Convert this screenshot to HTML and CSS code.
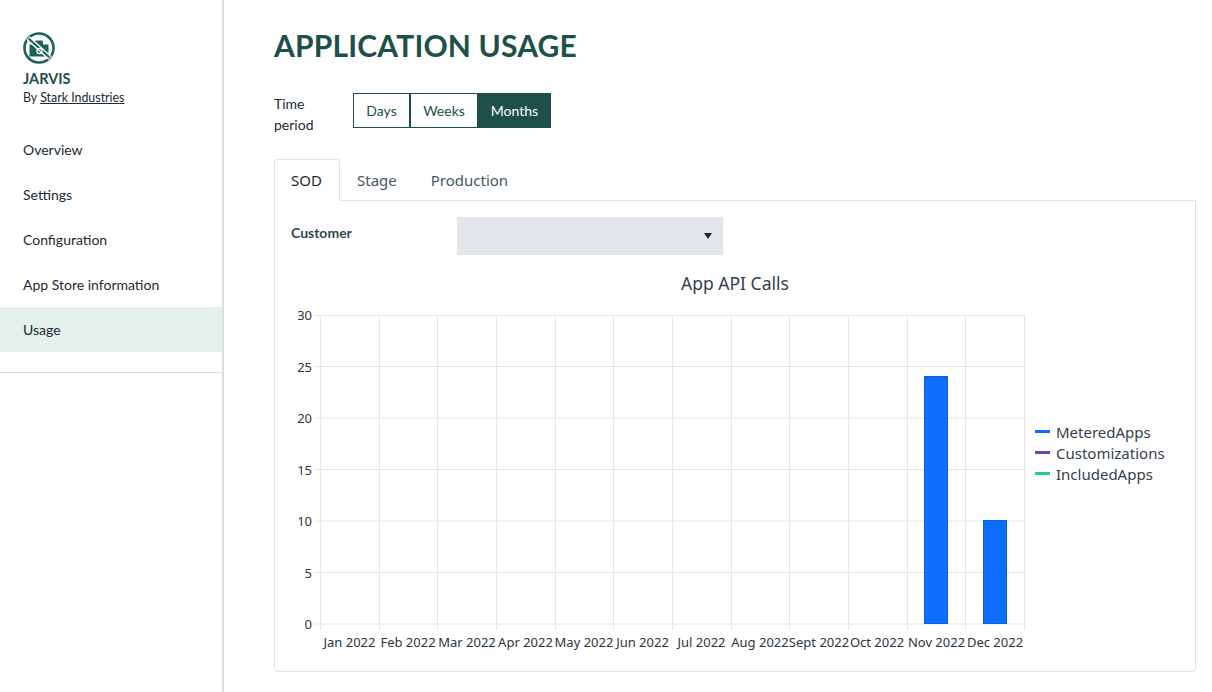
FILE: index.html
```html
<!DOCTYPE html>
<html lang="en">
<head>
<meta charset="utf-8">
<title>Application Usage</title>
<link rel="stylesheet" href="styles.css">
</head>
<body>
<div class="app">
  <aside class="sidebar">
    <div class="brand">
      <svg class="brand-icon" width="32" height="32" viewBox="0 0 32 32" aria-hidden="true">
        <circle cx="16" cy="16" r="14.5" fill="none" stroke="#1b6257" stroke-width="2.6"/>
        <path d="M6.5 12.5h5.5V9.5a1 1 0 0 1 1-1h6a1 1 0 0 1 1 1v3h5.500V24.500H6.500z" fill="#1b6257"/>
        <path d="M5 6 27 26" stroke="#fff" stroke-width="5"/>
        <path d="M5.500 6.500 26.500 25.500" stroke="#1b6257" stroke-width="2.200"/>
        <circle cx="16.500" cy="19" r="2.600" fill="none" stroke="#fff" stroke-width="1.200"/>
      </svg>
      <div class="brand-name">JARVIS</div>
      <div class="brand-by">By <a href="#">Stark Industries</a></div>
    </div>
    <nav class="nav">
      <a class="nav-item" href="#">Overview</a>
      <a class="nav-item" href="#">Settings</a>
      <a class="nav-item" href="#">Configuration</a>
      <a class="nav-item" href="#">App Store information</a>
      <a class="nav-item active" href="#">Usage</a>
    </nav>
  </aside>
  <main class="main">
    <h1 class="title">APPLICATION USAGE</h1>
    <div class="period">
      <div class="period-label">Time period</div>
      <div class="seg">
        <button class="seg-btn">Days</button>
        <button class="seg-btn">Weeks</button>
        <button class="seg-btn on">Months</button>
      </div>
    </div>
    <div class="tabs">
      <a class="tab on" href="#">SOD</a>
      <a class="tab" href="#">Stage</a>
      <a class="tab" href="#">Production</a>
    </div>
    <section class="card">
      <div class="filter">
        <label class="filter-label">Customer</label>
        <div class="select"><span class="caret"></span></div>
      </div>
      <svg class="chart" width="920" height="400" viewBox="275 265 920 400">
        <text class="c-title" x="735" y="290" text-anchor="middle">App API Calls</text>
        <g class="grid">
          <path d="M314 315.5H1024.500M314 366.500H1024.500M314 418H1024.500M314 469.500H1024.500M314 521H1024.500M314 572.500H1024.500M314 624H1024.500"/>
          <path d="M320.500 315V630M379.500 315V630M437.500 315V630M496.500 315V630M555.500 315V630M613.500 315V630M672.500 315V630M731.500 315V630M789.500 315V630M848.500 315V630M907.500 315V630M965.500 315V630M1024.500 315V630"/>
        </g>
        <g class="bars">
          <rect x="924.500" y="376.500" width="23" height="247"/>
          <rect x="983.500" y="520.500" width="23" height="103"/>
        </g>
        <g class="y-axis" text-anchor="end">
          <text x="312" y="320">30</text>
          <text x="312" y="372">25</text>
          <text x="312" y="423">20</text>
          <text x="312" y="475">15</text>
          <text x="312" y="526">10</text>
          <text x="312" y="578">5</text>
          <text x="312" y="629">0</text>
        </g>
        <g class="x-axis" text-anchor="middle">
          <text x="349.500" y="647">Jan 2022</text>
          <text x="408" y="647">Feb 2022</text>
          <text x="467" y="647">Mar 2022</text>
          <text x="525.500" y="647">Apr 2022</text>
          <text x="584" y="647">May 2022</text>
          <text x="642.500" y="647">Jun 2022</text>
          <text x="701.500" y="647">Jul 2022</text>
          <text x="760" y="647">Aug 2022</text>
          <text x="819" y="647">Sept 2022</text>
          <text x="877" y="647">Oct 2022</text>
          <text x="936.500" y="647">Nov 2022</text>
          <text x="995" y="647">Dec 2022</text>
        </g>
        <g class="legend">
          <rect x="1035" y="430" width="15" height="3" fill="#0d6efd"/>
          <text x="1056" y="438">MeteredApps</text>
          <rect x="1035" y="451" width="15" height="3" fill="#6f42c1"/>
          <text x="1056" y="459">Customizations</text>
          <rect x="1035" y="472" width="15" height="3" fill="#20c997"/>
          <text x="1056" y="480">IncludedApps</text>
        </g>
      </svg>
    </section>
  </main>
</div>
</body>
</html>
```
FILE: styles.css
```css
* { box-sizing: border-box; }
html, body { margin: 0; height: 100%; overflow: hidden; background: #fff; }
body { font-family: "Lato", "Liberation Sans", sans-serif; color: #212b36; }
a { color: inherit; text-decoration: none; }

.app { display: flex; height: 692px; }

.sidebar { flex: 0 0 224px; border-right: 2px solid #dddddd; }
.brand { padding: 32px 0 0 23px; height: 127px; }
.brand-icon { display: block; }
.brand-name { margin-top: 5px; font-size: 14.5px; line-height: 20px; font-weight: 700; color: #1d5048; }
.brand-by { font-size: 12.4px; line-height: 17px; color: #212b36; }
.brand-by a { text-decoration: underline; }

.nav { display: flex; flex-direction: column; padding-bottom: 20px; border-bottom: 1px solid #d9d9d9; height: 246px; }
.nav-item { flex: 0 0 45px; padding-left: 23px; font-size: 14px; line-height: 45px; color: #212b36; }
.nav-item.active { background: #e3f0eb; }

.main { flex: 1; padding: 0 16px 0 50px; }
.title { margin: 25px 0 0; font-size: 30px; line-height: 40px; font-weight: 700; color: #1d5048; letter-spacing: 0.17px; }

.period { display: flex; margin-top: 28px; align-items: flex-start; }
.period-label { width: 79px; font-size: 14px; line-height: 21px; color: #212b36; padding-right: 30px; }
.seg { display: flex; }
.seg-btn { height: 35px; padding: 0; border: 1px solid #1d5048; background: #fff; font-family: "Lato", sans-serif; font-size: 14px; color: #1d5048; width: 57px; }
.seg-btn + .seg-btn { width: 68px; }
.seg-btn.on { width: 73px; background: #1d5048; color: #fff; }

.tabs { display: flex; margin-top: 24px; height: 42px; position: relative; z-index: 1; font-family: "Noto Sans", sans-serif; font-size: 15px; }
.tab { padding: 0 16px; line-height: 40px; color: #3f5a61; border: 1px solid transparent; }
.tab.on { width: 66px; color: #212b36; background: #fff; border-color: #e0e2e6; border-bottom-color: #fff; border-radius: 4px 4px 0 0; }

.card { margin-top: -1px; height: 472px; border: 1px solid #e0e2e6; border-radius: 0 0 4px 4px; }
.filter { display: flex; padding: 16px 0 0 16px; height: 64px; }
.filter-label { width: 166px; font-size: 14px; line-height: 32px; font-weight: 700; color: #2d4a4f; }
.select { width: 266px; height: 38px; background: #e2e5ea; position: relative; }
.caret { position: absolute; right: 11px; top: 16px; border-left: 4px solid transparent; border-right: 4px solid transparent; border-top: 6px solid #212529; }

.chart { display: block; font-family: "Noto Sans", sans-serif; }
.c-title { font-size: 17.500px; fill: #333f4d; }
.grid path { fill: none; stroke: #e6e6e6; stroke-width: 1; }
.bars rect { fill: #0d6efd; stroke: #0b5ed7; stroke-width: 1; }
.y-axis text, .x-axis text { font-size: 13px; fill: #2b3540; }
.legend text { font-size: 15px; fill: #333f4d; }
```
